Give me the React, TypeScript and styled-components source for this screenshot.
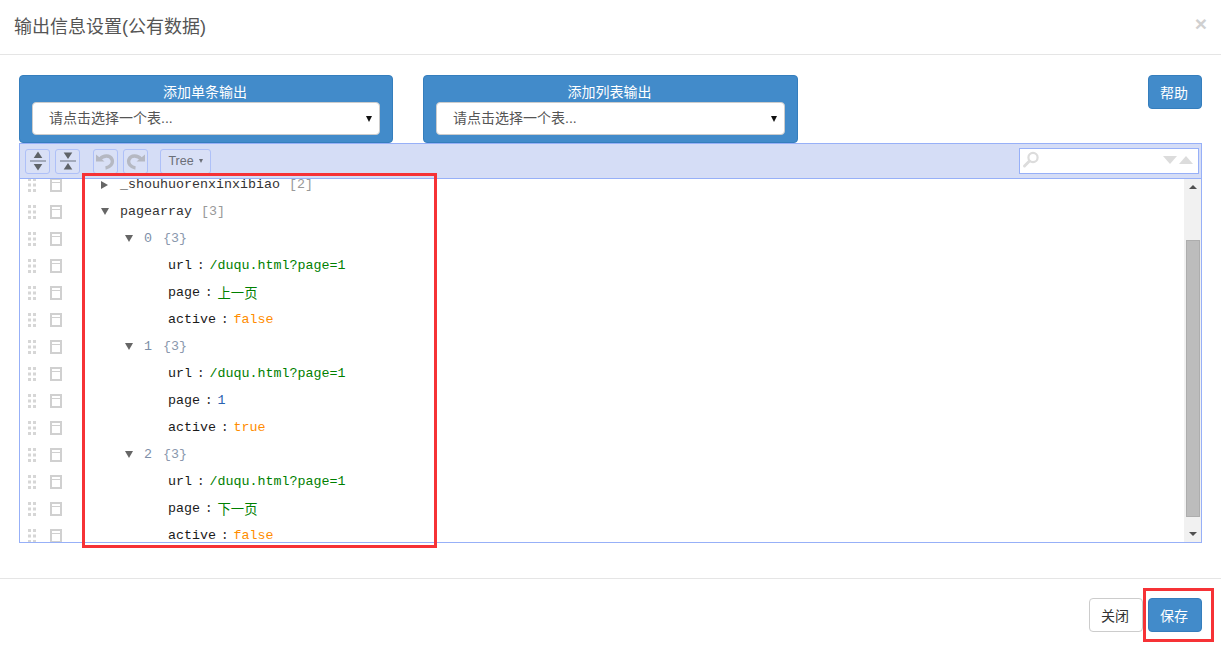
import styled, { createGlobalStyle } from 'styled-components'

const CJK = `"Liberation Sans", "Noto Sans CJK SC", sans-serif`
const MONO = `"Liberation Mono", "Noto Sans CJK SC", monospace`

const GlobalStyle = createGlobalStyle`
  html, body {
    margin: 0;
    padding: 0;
    background: #ffffff;
    overflow: hidden;
  }
  * {
    box-sizing: border-box;
  }
`

type TreeRow =
  | { kind: 'node'; level: number; open: boolean; label: string; count: string; index?: boolean }
  | { kind: 'field'; name: string; value: string; type: 'string' | 'number' | 'boolean' }

const rows: TreeRow[] = [
  { kind: 'node', level: 0, open: false, label: '_shouhuorenxinxibiao', count: '[2]' },
  { kind: 'node', level: 0, open: true, label: 'pagearray', count: '[3]' },
  { kind: 'node', level: 1, open: true, label: '0', count: '{3}', index: true },
  { kind: 'field', name: 'url', value: '/duqu.html?page=1', type: 'string' },
  { kind: 'field', name: 'page', value: '上一页', type: 'string' },
  { kind: 'field', name: 'active', value: 'false', type: 'boolean' },
  { kind: 'node', level: 1, open: true, label: '1', count: '{3}', index: true },
  { kind: 'field', name: 'url', value: '/duqu.html?page=1', type: 'string' },
  { kind: 'field', name: 'page', value: '1', type: 'number' },
  { kind: 'field', name: 'active', value: 'true', type: 'boolean' },
  { kind: 'node', level: 1, open: true, label: '2', count: '{3}', index: true },
  { kind: 'field', name: 'url', value: '/duqu.html?page=1', type: 'string' },
  { kind: 'field', name: 'page', value: '下一页', type: 'string' },
  { kind: 'field', name: 'active', value: 'false', type: 'boolean' },
]

function GripIcon() {
  return (
    <svg width="8" height="14" viewBox="0 0 8 14" fill="#d6d6d6">
      {[0, 5.5, 11].map((y) => (
        <g key={y}>
          <rect x="0" y={y} width="3" height="3" />
          <rect x="5" y={y} width="3" height="3" />
        </g>
      ))}
    </svg>
  )
}

function BoxIcon() {
  return (
    <svg width="12" height="14" viewBox="0 0 12 14" fill="none" stroke="#d0d0d0">
      <rect x="1" y="1" width="10" height="12" strokeWidth="2" />
      <path d="M1 4.5H11" strokeWidth="1" />
    </svg>
  )
}

function ExpandIcon() {
  return (
    <svg width="16" height="20" viewBox="0 0 16 20">
      <path d="M0 10H16" stroke="#6b7280" strokeWidth="1" />
      <path d="M8 0.5L12.3 7H3.7Z" fill="#5f6368" />
      <path d="M8 19.5L12.3 13H3.7Z" fill="#5f6368" />
    </svg>
  )
}

function CollapseIcon() {
  return (
    <svg width="16" height="20" viewBox="0 0 16 20">
      <path d="M0 10H16" stroke="#6b7280" strokeWidth="1" />
      <path d="M8 8L12.3 1.5H3.7Z" fill="#5f6368" />
      <path d="M8 12L12.3 18.5H3.7Z" fill="#5f6368" />
    </svg>
  )
}

function HistoryIcon(props: { flip?: boolean }) {
  return (
    <HistorySvg $flip={props.flip} width="19" height="17" viewBox="0 0 19 17">
      <path d="M4 6C7 2.500 14 1.500 16 6.500C17.500 10.500 14 14.500 9.500 15" fill="none" stroke="#b5b8c2" strokeWidth="3.4" />
      <path d="M0 1.500L8.500 8.500H0Z" fill="#b5b8c2" />
    </HistorySvg>
  )
}

function SearchIcon() {
  return (
    <svg width="18" height="18" viewBox="0 0 18 18">
      <circle cx="11" cy="6.500" r="4.600" fill="none" stroke="#dcdcdc" strokeWidth="2.200" />
      <path d="M7.500 10L2.500 15" stroke="#dcdcdc" strokeWidth="3" strokeLinecap="round" />
    </svg>
  )
}

function TableSelect(props: { title: string; width: number }) {
  return (
    <SelectPanel $width={props.width}>
      <PanelTitle>{props.title}</PanelTitle>
      <SelectBox>
        请点击选择一个表...
        <SelectCaret />
      </SelectBox>
    </SelectPanel>
  )
}

function Row(props: { row: TreeRow }) {
  const row = props.row
  return (
    <RowWrap>
      <GripCell>
        <GripIcon />
      </GripCell>
      <BoxCell>
        <BoxIcon />
      </BoxCell>
      {row.kind === 'node' ? (
        <TreeCell $level={row.level}>
          <Toggler $open={row.open} />
          <NodeLabel $index={row.index}>{row.label}</NodeLabel>
          <NodeCount $index={row.index}>{row.count}</NodeCount>
        </TreeCell>
      ) : (
        <TreeCell $level={2}>
          <TogglerSlot />
          <FieldName>{row.name}</FieldName>
          <Separator>:</Separator>
          <FieldValue $type={row.type}>{row.value}</FieldValue>
        </TreeCell>
      )}
    </RowWrap>
  )
}

export default function App() {
  return (
    <>
      <GlobalStyle />
      <Dialog>
        <Header>
          <Title>输出信息设置(公有数据)</Title>
          <CloseMark>×</CloseMark>
        </Header>
        <Body>
          <TopBar>
            <TableSelect title="添加单条输出" width={374} />
            <TableSelect title="添加列表输出" width={375} />
            <HelpButton>帮助</HelpButton>
          </TopBar>
          <Editor>
            <MenuBar>
              <ToolGroup>
                <ToolButton>
                  <ExpandIcon />
                </ToolButton>
                <ToolButton>
                  <CollapseIcon />
                </ToolButton>
              </ToolGroup>
              <ToolGroup>
                <ToolButton>
                  <HistoryIcon />
                </ToolButton>
                <ToolButton>
                  <HistoryIcon flip />
                </ToolButton>
              </ToolGroup>
              <ModeButton>
                Tree
                <ModeCaret />
              </ModeButton>
              <SearchBox>
                <SearchIcon />
                <SearchArrows>
                  <SearchArrow />
                  <SearchArrow $up />
                </SearchArrows>
              </SearchBox>
            </MenuBar>
            <Content>
              <TreeArea>
                <TreeList>
                  {rows.map((row, i) => (
                    <Row key={i} row={row} />
                  ))}
                </TreeList>
              </TreeArea>
              <ScrollBar>
                <ScrollArrow />
                <ScrollThumb />
                <ScrollArrow $down />
              </ScrollBar>
            </Content>
          </Editor>
        </Body>
        <Footer>
          <CloseButton>关闭</CloseButton>
          <HelpButton>保存</HelpButton>
        </Footer>
        <TreeHighlight />
        <SaveHighlight />
      </Dialog>
    </>
  )
}

const Dialog = styled.div`
  position: relative;
  display: flex;
  flex-direction: column;
  width: 1221px;
  height: 652px;
  overflow: hidden;
  background: #ffffff;
  font-family: ${CJK};
`

const Header = styled.div`
  display: flex;
  align-items: center;
  justify-content: space-between;
  height: 55px;
  padding: 0 14px 4px 14px;
  border-bottom: 1px solid #e5e5e5;
`

const Title = styled.div`
  font-size: 18px;
  color: #555555;
`

const CloseMark = styled.div`
  margin-bottom: 4px;
  font-size: 21px;
  font-weight: 700;
  line-height: 1;
  color: #d0d0d0;
`

const Body = styled.div`
  display: flex;
  flex-direction: column;
  padding: 20px 19px 0;
`

const TopBar = styled.div`
  display: flex;
  align-items: flex-start;
  gap: 30px;
  height: 68px;
`

const SelectPanel = styled.div<{ $width: number }>`
  display: flex;
  flex-direction: column;
  width: ${(props) => props.$width}px;
  height: 68px;
  padding: 8px 12px 0;
  background: #428bca;
  border: 1px solid #357ebd;
  border-radius: 4px;
`

const PanelTitle = styled.div`
  height: 18px;
  margin-top: -1px;
  margin-bottom: 1px;
  padding-right: 2px;
  font-size: 14px;
  line-height: 18px;
  text-align: center;
  color: #ffffff;
`

const SelectBox = styled.div`
  position: relative;
  height: 33px;
  padding-left: 16px;
  background: #ffffff;
  border: 1px solid #cccccc;
  border-radius: 4px;
  font-size: 14px;
  line-height: 31px;
  color: #555555;
`

const SelectCaret = styled.span`
  position: absolute;
  top: 13px;
  right: 7px;
  width: 0;
  height: 0;
  border-top: 6px solid #111111;
  border-left: 3px solid transparent;
  border-right: 3px solid transparent;
`

const HelpButton = styled.button`
  width: 54px;
  height: 34px;
  padding: 0 2px 0 0;
  background: #428bca;
  border: 1px solid #357ebd;
  border-radius: 4px;
  font-family: ${CJK};
  font-size: 14px;
  color: #ffffff;

  ${TopBar} & {
    margin-left: auto;
  }
`

const CloseButton = styled.button`
  width: 54px;
  height: 34px;
  padding: 0 2px 0 0;
  background: #ffffff;
  border: 1px solid #cccccc;
  border-radius: 4px;
  font-family: ${CJK};
  font-size: 14px;
  color: #333333;
`

const Editor = styled.div`
  display: flex;
  flex-direction: column;
  height: 400px;
  border: 1px solid #97b0f8;
`

const MenuBar = styled.div`
  display: flex;
  align-items: center;
  height: 35px;
  padding: 0 2px 0 5px;
  background: #d5ddf6;
  border-bottom: 1px solid #97b0f8;
`

const ToolGroup = styled.div`
  display: flex;
  gap: 5px;
  margin-right: 13px;

  & + & {
    margin-right: 12px;
  }
`

const ToolButton = styled.div`
  display: flex;
  align-items: center;
  justify-content: center;
  width: 25px;
  height: 25px;
  background: #d9e0f6;
  border: 1px solid #aec0f8;
  border-radius: 3px;
`

const HistorySvg = styled.svg<{ $flip?: boolean }>`
  transform: ${(props) => (props.$flip ? 'scaleX(-1)' : 'none')};
`

const ModeButton = styled.div`
  display: flex;
  align-items: center;
  justify-content: center;
  gap: 5px;
  width: 51px;
  height: 25px;
  background: #d9e0f6;
  border: 1px solid #aec0f8;
  border-radius: 3px;
  font-family: "Liberation Sans", sans-serif;
  font-size: 12.5px;
  color: #6b6f78;
`

const ModeCaret = styled.span`
  width: 0;
  height: 0;
  border-top: 4px solid #6b6f78;
  border-left: 2.5px solid transparent;
  border-right: 2.5px solid transparent;
`

const SearchBox = styled.div`
  display: flex;
  align-items: center;
  justify-content: space-between;
  width: 180px;
  height: 26px;
  margin-left: auto;
  padding: 0 5px 2px 2px;
  background: #ffffff;
  border: 1px solid #97b0f8;
`

const SearchArrows = styled.div`
  display: flex;
  gap: 2px;
`

const SearchArrow = styled.span<{ $up?: boolean }>`
  width: 0;
  height: 0;
  border-left: 7px solid transparent;
  border-right: 7px solid transparent;
  border-top: ${(props) => (props.$up ? 'none' : '8px solid #dcdcdc')};
  border-bottom: ${(props) => (props.$up ? '8px solid #dcdcdc' : 'none')};
`

const Content = styled.div`
  display: flex;
  flex: 1;
  min-height: 0;
`

const TreeArea = styled.div`
  flex: 1;
  overflow: hidden;
`

const TreeList = styled.div`
  margin-top: -8px;
`

const RowWrap = styled.div`
  display: flex;
  align-items: center;
  height: 27px;
  font-family: ${MONO};
  font-size: 13.33px;
`

const GripCell = styled.div`
  display: flex;
  width: 30px;
  padding-left: 8px;
`

const BoxCell = styled.div`
  display: flex;
  width: 50px;
`

const TreeCell = styled.div<{ $level: number }>`
  display: flex;
  align-items: center;
  padding-left: ${(props) => props.$level * 24}px;
`

const TogglerSlot = styled.span`
  width: 20px;
`

const Toggler = styled.span<{ $open: boolean }>`
  width: 0;
  height: 0;
  margin-left: 1px;
  margin-right: ${(props) => (props.$open ? 11 : 12)}px;
  border-style: solid;
  border-color: transparent;
  ${(props) =>
    props.$open
      ? 'border-width: 7px 4px 0; border-top-color: #666666;'
      : 'border-width: 4px 0 4px 7px; border-left-color: #666666;'}
`

const NodeLabel = styled.span<{ $index?: boolean }>`
  color: ${(props) => (props.$index ? '#7d8fa8' : '#333333')};
`

const NodeCount = styled.span<{ $index?: boolean }>`
  margin-left: ${(props) => (props.$index ? 11 : 9)}px;
  color: ${(props) => (props.$index ? '#8a98ad' : '#999999')};
`

const FieldName = styled.span`
  color: #1a1a1a;
`

const Separator = styled.span`
  width: 17.5px;
  text-align: center;
  color: #333333;
`

const valueColors = { string: '#008000', number: '#2a62b0', boolean: '#ff8c00' }

const FieldValue = styled.span<{ $type: 'string' | 'number' | 'boolean' }>`
  color: ${(props) => valueColors[props.$type]};
`

const ScrollBar = styled.div`
  display: flex;
  flex-direction: column;
  align-items: center;
  justify-content: space-between;
  width: 17px;
  background: #f1f1f1;
`

const ScrollThumb = styled.div`
  width: 14px;
  height: 277px;
  margin-top: 44px;
  margin-bottom: 8px;
  background: #bcbcbc;
  border: 1px solid #adadad;
`

const ScrollArrow = styled.span<{ $down?: boolean }>`
  width: 0;
  height: 0;
  margin: 6px 0;
  border-left: 4px solid transparent;
  border-right: 4px solid transparent;
  border-top: ${(props) => (props.$down ? '4px solid #505050' : 'none')};
  border-bottom: ${(props) => (props.$down ? 'none' : '4px solid #505050')};
`

const Footer = styled.div`
  display: flex;
  justify-content: flex-end;
  gap: 5px;
  margin-top: 35px;
  padding: 19px 19px 20px;
  border-top: 1px solid #e5e5e5;
`

const Highlight = styled.div`
  position: absolute;
  border: 3px solid #f63236;
  pointer-events: none;
`

const TreeHighlight = styled(Highlight)`
  left: 82px;
  top: 173px;
  width: 355px;
  height: 375px;
`

const SaveHighlight = styled(Highlight)`
  left: 1143px;
  top: 588px;
  width: 71px;
  height: 54px;
`
